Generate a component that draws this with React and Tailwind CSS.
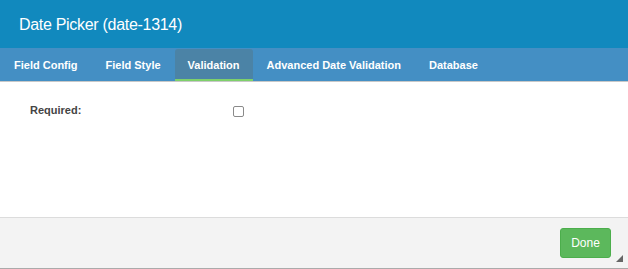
const tabs = ['Field Config', 'Field Style', 'Validation', 'Advanced Date Validation', 'Database']

function App() {
  return (
    <div className="relative flex h-[269px] w-[628px] flex-col overflow-hidden bg-white font-['Liberation_Sans',Arial,sans-serif]">
      <header className="flex h-[48px] items-center bg-[#1189be] pl-[19px] pt-[1px] text-[16px] tracking-[-0.3px] text-white">
        Date Picker (date-1314)
      </header>

      <nav className="flex h-[34px] items-end border-b border-[#c8c8c8] bg-[#448fc4]">
        {tabs.map((tab) => (
          <div
            key={tab}
            className={
              tab === 'Validation'
                ? 'flex h-[32px] items-center rounded-t-[3px] border-b-2 border-[#7ed06b] bg-[#4b83a6] px-[13px] pt-[2px] text-[11px] font-bold text-white'
                : 'flex h-[32px] items-center px-[14px] text-[11px] font-bold text-white'
            }
          >
            {tab}
          </div>
        ))}
      </nav>

      <main className="flex-1 px-[30px] pt-[20px]">
        <div className="flex items-center">
          <label className="w-[203px] text-[11px] font-bold text-[#444]">Required:</label>
          <span className="mt-[3px] h-[11px] w-[11px] rounded-[2px] border border-[#8a8a8a] bg-white" />
        </div>
      </main>

      <footer className="flex h-[52px] items-center justify-end border-y border-t-[#dcdcdc] border-b-[#aaaaaa] bg-[#f3f3f3] pr-[17px]">
        <button className="h-[30px] w-[51px] rounded-[3px] border border-[#4cae4c] bg-[#5cb85c] text-[12px] text-white">
          Done
        </button>
      </footer>

      <svg className="absolute bottom-[7px] right-[5px]" width="7" height="7" viewBox="0 0 7 7">
        <path d="M7 0 L7 7 L0 7 Z" fill="#666" />
      </svg>
    </div>
  )
}

export default App
